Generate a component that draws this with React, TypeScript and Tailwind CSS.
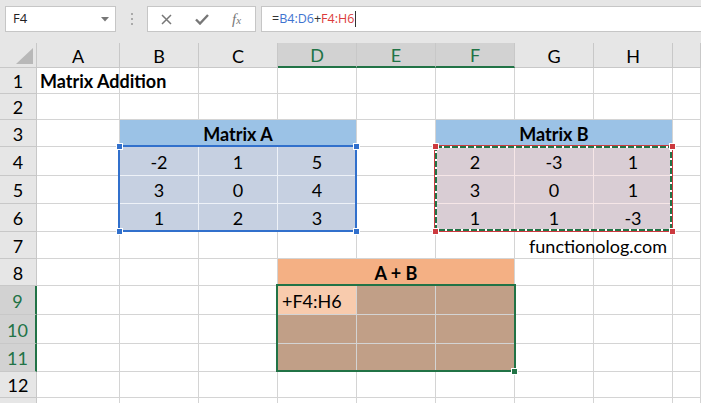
import React from "react";

type Cell = {
  text?: string;
  cls?: string;
  wide?: boolean;
};

const FONT = { fontFamily: "Lato, 'Liberation Sans', sans-serif" };

const GRID = "border-r border-b border-[#d4d4d4]";
const BLANK: Cell = { cls: "bg-white" };
const AH = "bg-[#9bc2e6] border-[#d4d4d4] font-bold justify-center";
const AC = "bg-[#c6d0e1] border-[#eef2f8] justify-center";
const BC = "bg-[#d9cdd4] border-[#f6e6e7] justify-center";
const SC = "bg-[#c19f87] border-[#c6c6c6]";
const RH = "bg-[#f4b084] border-[#d4d4d4] font-bold justify-center";

const blanks = (n: number): Cell[] => Array.from({ length: n }, () => BLANK);
const a = (t: string): Cell => ({ text: t, cls: AC });
const b = (t: string): Cell => ({ text: t, cls: BC });

// A..I for every sheet row, merged headers take three columns
const rows: Cell[][] = [
  [{ text: "Matrix Addition", cls: "bg-white font-bold pl-[3px] relative z-10 whitespace-nowrap" }, ...blanks(8)],
  blanks(9),
  [BLANK, { text: "Matrix A", cls: AH, wide: true }, BLANK, { text: "Matrix B", cls: AH, wide: true }, BLANK],
  [BLANK, a("-2"), a("1"), a("5"), BLANK, b("2"), b("-3"), b("1"), BLANK],
  [BLANK, a("3"), a("0"), a("4"), BLANK, b("3"), b("0"), b("1"), BLANK],
  [BLANK, a("1"), a("2"), a("3"), BLANK, b("1"), b("1"), b("-3"), BLANK],
  [
    ...blanks(7),
    { text: "functionolog.com", cls: "bg-white justify-end pr-[5px] relative z-10 whitespace-nowrap" },
    BLANK,
  ],
  [...blanks(3), { text: "A + B", cls: RH, wide: true }, ...blanks(3)],
  [...blanks(3), { text: "+F4:H6", cls: "bg-[#f8cbad] border-[#c6c6c6] pl-[4px]" }, { cls: SC }, { cls: SC }, ...blanks(3)],
  [...blanks(3), { cls: SC }, { cls: SC }, { cls: SC }, ...blanks(3)],
  [...blanks(3), { cls: SC }, { cls: SC }, { cls: SC }, ...blanks(3)],
  blanks(9),
  blanks(9),
];

const COLS = ["A", "B", "C", "D", "E", "F", "G", "H", ""];
const SEL_COLS = ["D", "E", "F"];

const Handle = ({ x, y, color }: { x: number; y: number; color: string }) => (
  <div
    className={`absolute w-[7px] h-[7px] border border-white z-30 ${color}`}
    style={{ left: x - 3, top: y - 3 }}
  />
);

function FormulaBar() {
  return (
    <div className="h-[43px] bg-[#e6e6e6] flex items-start pt-[6px] pl-[5px] font-['Open_Sans',sans-serif]">
      <div className="w-[111px] h-[26px] bg-white border border-[#c6c6c6] flex items-center justify-between pl-[7px] pr-[6px] text-[13px] text-[#222]">
        <span>F4</span>
        <svg width="8" height="5" viewBox="0 0 8 5">
          <path d="M0 0h8L4 4.5z" fill="#777" />
        </svg>
      </div>
      <div className="w-[31px] h-[26px] flex flex-col items-center justify-center gap-[3px]">
        <span className="w-[2px] h-[2px] bg-[#aaa]" />
        <span className="w-[2px] h-[2px] bg-[#aaa]" />
        <span className="w-[2px] h-[2px] bg-[#aaa]" />
      </div>
      <div className="w-[109px] h-[26px] bg-white border border-[#c6c6c6] flex items-center pl-[13px] gap-[23px]">
        <svg width="11" height="11" viewBox="0 0 11 11">
          <path d="M1 1l9 9M10 1l-9 9" stroke="#777" strokeWidth="1.5" />
        </svg>
        <svg width="14" height="11" viewBox="0 0 14 11">
          <path d="M1 5.5l4 4L13 1" stroke="#777" strokeWidth="2.4" fill="none" />
        </svg>
        <span className="font-['Liberation_Serif',serif] italic text-[15px] text-[#777] leading-none">
          f<span className="text-[11px]">x</span>
        </span>
      </div>
      <div className="ml-[5px] flex-1 h-[26px] bg-white border border-[#c6c6c6] border-r-0 flex items-center pl-[10px] text-[12.5px]">
        <span className="text-[#333]">=</span>
        <span className="text-[#3f74d0]">B4:D6</span>
        <span className="text-[#333]">+</span>
        <span className="text-[#dc3c3c]">F4:H6</span>
        <span className="w-px h-[16px] bg-[#333] ml-px" />
      </div>
    </div>
  );
}

export default function App() {
  return (
    <div className="w-[701px] h-[403px] overflow-hidden bg-white text-[18px] text-black" style={FONT}>
      <FormulaBar />
      <div className="relative grid grid-cols-[37px_83px_79px_79px_79px_79px_79px_79px_79px_1fr] grid-rows-[25px_26px_26px_27px_29px_28px_28px_27px_27px_29px_29px_28px_26px_26px]">
        <div className="bg-[#e6e6e6] border-r border-b border-[#c8c8c8] flex items-end justify-end pr-[3px] pb-[3px]">
          <svg width="17" height="16" viewBox="0 0 17 16">
            <path d="M17 0V16H0z" fill="#b8b8b8" />
          </svg>
        </div>
        {COLS.map((c, i) => {
          const sel = SEL_COLS.includes(c);
          return (
            <div
              key={"h" + i}
              className={
                sel
                  ? "bg-[#d2d2d2] text-[#217346] border-r border-[#c8c8c8] border-b-2 border-b-[#217346] flex items-center justify-center pt-[2px]"
                  : "bg-[#e6e6e6] border-r border-b border-[#c8c8c8] flex items-center justify-center pt-[2px]"
              }
            >
              {c}
            </div>
          );
        })}
        {rows.map((cells, r) => {
          const n = r + 1;
          const sel = n >= 9 && n <= 11;
          return (
            <React.Fragment key={"r" + n}>
              <div
                className={
                  sel
                    ? "bg-[#d2d2d2] text-[#217346] border-b border-[#c8c8c8] border-r-2 border-r-[#217346] flex items-center justify-center pt-[2px]"
                    : "bg-[#e6e6e6] border-r border-b border-[#c8c8c8] flex items-center justify-center pt-[2px]"
                }
              >
                {n < 13 ? n : ""}
              </div>
              {cells.map((cell, i) => (
                <div
                  key={i}
                  className={`${GRID} flex items-center pt-[2px] min-w-0 ${cell.wide ? "col-span-3" : ""} ${cell.cls ?? ""}`}
                >
                  {cell.text}
                </div>
              ))}
            </React.Fragment>
          );
        })}

        {/* Matrix A reference outline */}
        <div className="absolute left-[118px] top-[102px] w-[239px] h-[87px] border-2 border-[#3170cc] z-20" />
        <Handle x={119} y={103} color="bg-[#3170cc]" />
        <Handle x={356} y={103} color="bg-[#3170cc]" />
        <Handle x={119} y={188} color="bg-[#3170cc]" />
        <Handle x={356} y={188} color="bg-[#3170cc]" />

        {/* Matrix B copy marquee */}
        <svg className="absolute left-[434px] top-[102px] z-20" width="239" height="87" viewBox="0 0 239 87">
          <rect x="0.5" y="0.5" width="238" height="86" fill="none" stroke="#cc3a3f" />
          <rect x="2" y="2" width="235" height="83" fill="none" stroke="#fff" strokeWidth="2" />
          <rect x="2" y="2" width="235" height="83" fill="none" stroke="#217346" strokeWidth="2" strokeDasharray="6 2" />
        </svg>
        <Handle x={435} y={103} color="bg-[#cc3a3f]" />
        <Handle x={672} y={103} color="bg-[#cc3a3f]" />
        <Handle x={435} y={188} color="bg-[#cc3a3f]" />
        <Handle x={672} y={188} color="bg-[#cc3a3f]" />

        {/* selected range D9:F11 */}
        <div className="absolute left-[276px] top-[241px] w-[240px] h-[88px] border-2 border-[#217346] z-20" />
        <Handle x={514} y={328} color="bg-[#217346]" />
      </div>
    </div>
  );
}
